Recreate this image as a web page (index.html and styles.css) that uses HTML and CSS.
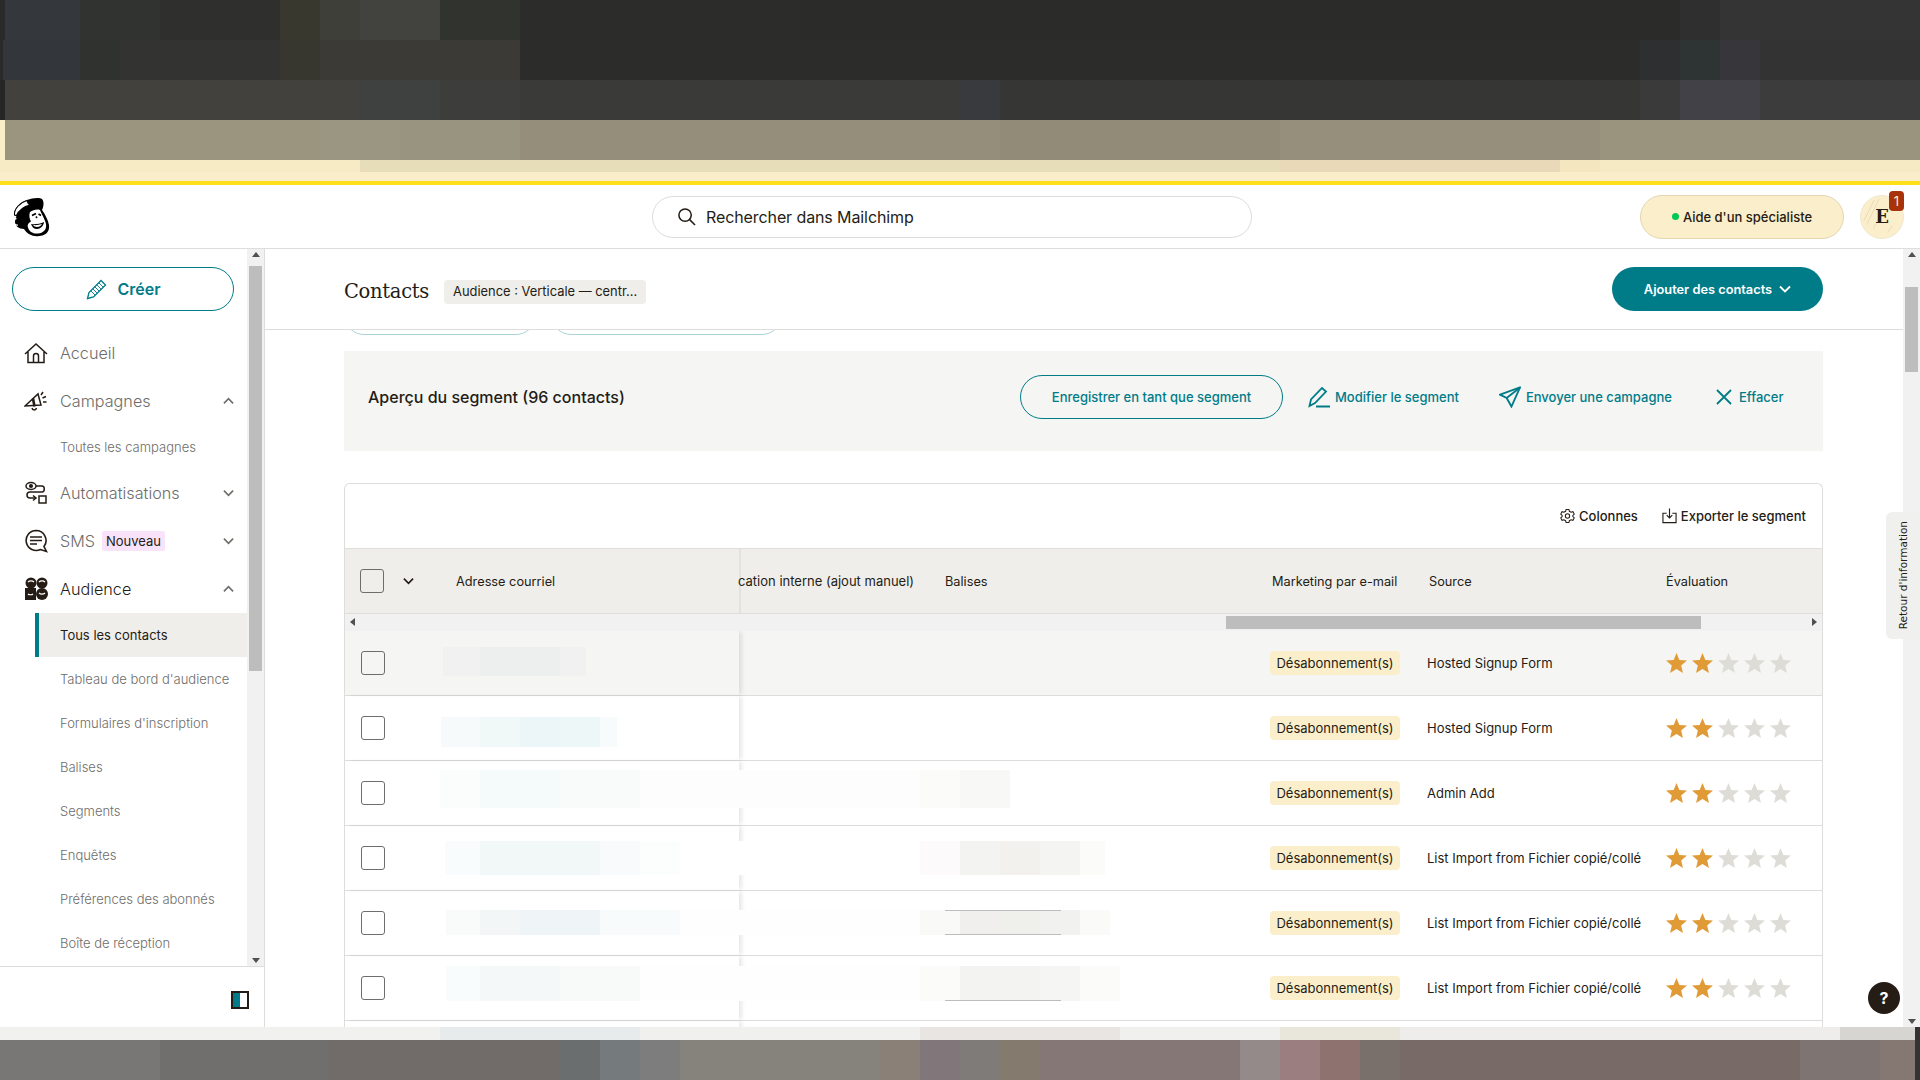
FILE: index.html
```html
<!DOCTYPE html>
<html lang="fr">
  <head>
    <meta charset="UTF-8" />
    <meta name="viewport" content="width=device-width, initial-scale=1.0" />
    <title>Contacts | Mailchimp</title>
    <link rel="stylesheet" href="styles.css">
  </head>
  <body>
    <svg class="defs" width="0" height="0">
      <symbol id="star" viewBox="0 0 22 21">
        <path d="M11 0l3 7.400 8 .6-6.100 5.100 1.900 7.900L11 16.700 4.200 21l1.900-7.900L0 8l8-.6z" fill="currentColor" />
      </symbol>
      <symbol id="chev-down" viewBox="0 0 12 8">
        <path d="M1 1.500l5 5 5-5" fill="none" stroke="currentColor" stroke-width="1.800" />
      </symbol>
      <symbol id="chev-up" viewBox="0 0 12 8">
        <path d="M1 6.500l5-5 5 5" fill="none" stroke="currentColor" stroke-width="1.800" />
      </symbol>
    </svg>

    <div class="blur-top">
      <div class="band band-1"></div>
      <div class="band band-2"></div>
      <div class="band band-3"></div>
      <div class="band band-4"></div>
      <div class="band band-5"></div>
      <div class="band band-6"></div>
    </div>

    <header class="topbar">
      <svg class="logo" viewBox="0 0 38 40">
        <path d="M2 18C2 11 8 5 15 3c5-2 12-3 15-1 2 2 2 7 0 11 3 4 6 10 7 15 1 7-4 11-10 11-6 1-12-2-15-7-5 0-9-3-9-7 0-3 1-5 2-7z" fill="#000" />
        <path d="M2.500 18C2 12 8 5.500 15 3.500c.5 2 1.500 3.500 3 4.500-6 1.500-11 5-13.500 10.500z" fill="#fff" stroke="#000" stroke-width="1.100" />
        <path d="M4.500 21.500c-2 0-2.800 2-2.500 3.800.3 1.800 2 3 3.800 2.700" fill="none" stroke="#fff" stroke-width="1.300" />
        <path d="M18 15c3-2 7-3 10-2 1 3 5 9 6 14 1 6-3 9-8 9.500-5 .5-9-2-10-6-1-3 1-5 3-6-2-3-2-7-1-9.500z" fill="#fff" />
        <path d="M20 18.500l4-2M26.500 17l2.500 1.500" stroke="#000" stroke-width="1.700" fill="none" />
        <path d="M24 19.500l1 1.500" stroke="#000" stroke-width="1.500" />
        <path d="M19 27c4 .5 9 0 13-2-.5 4-3.500 7-7 7-3 0-5-2-6-5z" fill="#000" />
        <path d="M21 28c3 .4 6 0 9-1-1 2-3 3-5 3-2 0-3-.7-4-2z" fill="#fff" />
      </svg>
      <div class="search">
        <svg class="search-icon" viewBox="0 0 20 20" fill="none" stroke="#241c15" stroke-width="1.600">
          <circle cx="8.500" cy="8.500" r="6.500" />
          <path d="M13 13l6 6" />
        </svg>
        <span>Rechercher dans Mailchimp</span>
      </div>
      <button class="expert-btn"><i class="dot"></i>Aide d'un spécialiste</button>
      <div class="avatar">
        <svg class="avatar-lines" viewBox="0 0 44 44" fill="none" stroke="#e2d6b4" stroke-width=".8">
          <path d="M3 26L14 4M6 30L19 3M13 34l5-10M28 38l5-7M31 14l4-3 2 4 4-1" />
        </svg>
        <span class="avatar-letter">E</span>
        <span class="avatar-badge">1</span>
      </div>
    </header>

    <div class="app">
      <aside class="sidebar">
        <div class="side-scroll">
          <nav class="nav">
            <button class="create-btn">
              <svg class="create-icon" viewBox="0 0 22 22" fill="none" stroke="#007c89" stroke-width="1.300">
                <path d="M1.500 20.500l1.500-6L15 2.500 19.500 7 7.500 19z" />
                <path d="M5 13l4 4M7 11l4 4M9 9l4 4M11 7l4 4M13 5l4 4" stroke-width=".9" />
              </svg>
              Créer
            </button>

            <a class="nav-item">
              <svg class="nav-icon" viewBox="0 0 24 24" fill="none" stroke="#241c15" stroke-width="1.500">
                <path d="M1 13L12 3l11 10M4 11v10.500h16V11" />
                <path d="M9.500 21.500V15a2.500 2.500 0 0 1 5 0v6.500" />
              </svg>
              Accueil
            </a>
            <a class="nav-item">
              <svg class="nav-icon" viewBox="0 0 24 24" fill="none" stroke="#241c15" stroke-width="1.500">
                <path d="M1 17L14 5l3 11z" />
                <path d="M9 9.500l1.500 8" stroke-width="2.600" />
                <path d="M8 19c.5 2.500 4 2.500 4.500 0M17 6l2-3M18.500 9l3.500-1.500M19 13h3.500" />
              </svg>
              Campagnes
              <svg class="nav-chev"><use href="#chev-up" /></svg>
            </a>
            <a class="sub-item">Toutes les campagnes</a>
            <a class="nav-item">
              <svg class="nav-icon" viewBox="0 0 24 24" fill="none" stroke="#241c15" stroke-width="1.500">
                <ellipse cx="7" cy="5" rx="5" ry="3.500" />
                <circle cx="7" cy="5" r="1.300" fill="#241c15" />
                <path d="M12 5h6c3 0 3 6 0 6H6c-4 0-4 6 0 6h6" />
                <path d="M9 14.500l3 2.500-3 2.500" />
                <rect x="15" y="15" width="7" height="7" />
              </svg>
              Automatisations
              <svg class="nav-chev"><use href="#chev-down" /></svg>
            </a>
            <a class="nav-item">
              <svg class="nav-icon" viewBox="0 0 24 24" fill="none" stroke="#241c15" stroke-width="1.600">
                <path d="M12 1.500a10 10 0 1 0 4.500 19l6 2-2.500-5A10 10 0 0 0 12 1.500z" />
                <path d="M6 8h12M6 11.500h12M6 15h7" />
              </svg>
              SMS
              <span class="tag-new">Nouveau</span>
              <svg class="nav-chev"><use href="#chev-down" /></svg>
            </a>
            <a class="nav-item current">
              <svg class="nav-icon" viewBox="0 0 24 24">
                <rect x="1" y="11" width="11" height="12" fill="#241c15" />
                <circle cx="7" cy="6" r="5.500" fill="#241c15" />
                <circle cx="18" cy="6" r="5.500" fill="#241c15" />
                <circle cx="18" cy="17" r="6" fill="#241c15" />
                <path d="M4 5c1.500-1.500 4.500-1.500 6 0M15 5c1.500-1.500 4.500-1.500 6 0M15 16c1.500 1.500 4.500 1.500 6 0M4 17c1 1 4 1 5 0" stroke="#fff" stroke-width="1.200" fill="none" />
              </svg>
              Audience
              <svg class="nav-chev"><use href="#chev-up" /></svg>
            </a>
            <a class="sub-item active">Tous les contacts</a>
            <a class="sub-item">Tableau de bord d'audience</a>
            <a class="sub-item">Formulaires d'inscription</a>
            <a class="sub-item">Balises</a>
            <a class="sub-item">Segments</a>
            <a class="sub-item">Enquêtes</a>
            <a class="sub-item">Préférences des abonnés</a>
            <a class="sub-item">Boîte de réception</a>
          </nav>
          <div class="scrollbar side-bar">
            <i class="arrow up"></i>
            <i class="thumb"></i>
            <i class="arrow down"></i>
          </div>
        </div>
        <div class="side-foot">
          <span class="collapse-icon"></span>
        </div>
      </aside>

      <main class="main">
        <div class="page-head">
          <h1>Contacts</h1>
          <span class="audience-tag">Audience : Verticale — centr...</span>
          <button class="add-btn">Ajouter des contacts <svg class="add-chev"><use href="#chev-down" /></svg></button>
        </div>

        <div class="content">
          <div class="pill-row">
            <span class="pill pill-a"></span>
            <span class="pill pill-b"></span>
          </div>

          <section class="segment">
            <h2>Aperçu du segment (96 contacts)</h2>
            <button class="save-btn">Enregistrer en tant que segment</button>
            <a class="seg-link link-edit">
              <svg class="seg-icon" viewBox="0 0 22 22" fill="none" stroke="#007c89" stroke-width="1.800">
                <path d="M1.500 20L3 13.500 14 2l4 3.500L7 17z" />
                <path d="M8 20.500h14" stroke-width="2" />
              </svg>
              Modifier le segment
            </a>
            <a class="seg-link link-send">
              <svg class="seg-icon" viewBox="0 0 23 22" fill="none" stroke="#007c89" stroke-width="1.900">
                <path d="M22 1L1 8.500l7 3.500 5 9z" />
                <path d="M22 1L8 12" />
              </svg>
              Envoyer une campagne
            </a>
            <a class="seg-link link-clear">
              <svg class="clear-icon" viewBox="0 0 16 16" fill="none" stroke="#007c89" stroke-width="1.800">
                <path d="M1 1l14 14M15 1L1 15" />
              </svg>
              Effacer
            </a>
          </section>

          <section class="card">
            <div class="card-tools">
              <a class="tool-link">
                <svg class="tool-icon" viewBox="0 0 16 16" fill="none" stroke="#241c15" stroke-width="1.100">
                  <path d="M6.500 1h3l.5 2 1.800 1 2-.6 1.400 2.600-1.500 1.400v1.200l1.500 1.400-1.400 2.600-2-.6-1.800 1-.5 2h-3l-.5-2-1.800-1-2 .6L.8 10l1.500-1.400V7.400L.8 6l1.400-2.600 2 .6L6 3z" />
                  <circle cx="8" cy="8" r="2.300" />
                </svg>
                Colonnes
              </a>
              <a class="tool-link">
                <svg class="tool-icon" viewBox="0 0 16 16" fill="none" stroke="#241c15" stroke-width="1.200">
                  <path d="M5 5H1v10h14V5h-4" />
                  <path d="M8 0v10M5 7l3 3 3-3" />
                </svg>
                Exporter le segment
              </a>
            </div>

            <div class="table-head">
              <div class="th-main">
                <span class="check"></span>
                <svg class="head-chev"><use href="#chev-down" /></svg>
                <span class="th-email">Adresse courriel</span>
              </div>
              <div class="th-clip">cation interne (ajout manuel)</div>
              <div class="th-tags">Balises</div>
              <div class="th-mkt">Marketing par e-mail</div>
              <div class="th-src">Source</div>
              <div>Évaluation</div>
            </div>

            <div class="hscroll">
              <i class="arrow left"></i>
              <i class="hthumb"></i>
              <i class="arrow right"></i>
            </div>

            <div class="row hover">
              <div class="col-main"><span class="check"></span></div>
              <div class="smear smear-1"></div>
              <div class="col-chip"><span class="chip">Désabonnement(s)</span></div>
              <div class="col-src">Hosted Signup Form</div>
              <div class="col-stars">
                <svg class="star on"><use href="#star" /></svg><svg class="star on"><use href="#star" /></svg><svg class="star"><use href="#star" /></svg><svg class="star"><use href="#star" /></svg><svg class="star"><use href="#star" /></svg>
              </div>
            </div>
            <div class="row">
              <div class="col-main"><span class="check"></span></div>
              <div class="smear smear-2"></div>
              <div class="col-chip"><span class="chip">Désabonnement(s)</span></div>
              <div class="col-src">Hosted Signup Form</div>
              <div class="col-stars">
                <svg class="star on"><use href="#star" /></svg><svg class="star on"><use href="#star" /></svg><svg class="star"><use href="#star" /></svg><svg class="star"><use href="#star" /></svg><svg class="star"><use href="#star" /></svg>
              </div>
            </div>
            <div class="row">
              <div class="col-main"><span class="check"></span></div>
              <div class="smear smear-3"></div>
              <div class="col-chip"><span class="chip">Désabonnement(s)</span></div>
              <div class="col-src">Admin Add</div>
              <div class="col-stars">
                <svg class="star on"><use href="#star" /></svg><svg class="star on"><use href="#star" /></svg><svg class="star"><use href="#star" /></svg><svg class="star"><use href="#star" /></svg><svg class="star"><use href="#star" /></svg>
              </div>
            </div>
            <div class="row">
              <div class="col-main"><span class="check"></span></div>
              <div class="smear smear-4"></div>
              <div class="col-chip"><span class="chip">Désabonnement(s)</span></div>
              <div class="col-src">List Import from Fichier copié/collé</div>
              <div class="col-stars">
                <svg class="star on"><use href="#star" /></svg><svg class="star on"><use href="#star" /></svg><svg class="star"><use href="#star" /></svg><svg class="star"><use href="#star" /></svg><svg class="star"><use href="#star" /></svg>
              </div>
            </div>
            <div class="row">
              <div class="col-main"><span class="check"></span></div>
              <div class="smear smear-5"></div>
              <div class="col-chip"><span class="chip">Désabonnement(s)</span></div>
              <div class="col-src">List Import from Fichier copié/collé</div>
              <div class="col-stars">
                <svg class="star on"><use href="#star" /></svg><svg class="star on"><use href="#star" /></svg><svg class="star"><use href="#star" /></svg><svg class="star"><use href="#star" /></svg><svg class="star"><use href="#star" /></svg>
              </div>
            </div>
            <div class="row">
              <div class="col-main"><span class="check"></span></div>
              <div class="smear smear-6"></div>
              <div class="col-chip"><span class="chip">Désabonnement(s)</span></div>
              <div class="col-src">List Import from Fichier copié/collé</div>
              <div class="col-stars">
                <svg class="star on"><use href="#star" /></svg><svg class="star on"><use href="#star" /></svg><svg class="star"><use href="#star" /></svg><svg class="star"><use href="#star" /></svg><svg class="star"><use href="#star" /></svg>
              </div>
            </div>
            <div class="row">
              <div class="col-main"></div>
            </div>
          </section>
        </div>
      </main>

      <div class="scrollbar page-bar">
        <i class="arrow up"></i>
        <i class="thumb"></i>
        <i class="arrow down"></i>
      </div>

      <div class="feedback-tab"><span>Retour d'information</span></div>
      <button class="help-btn">?</button>
    </div>

    <div class="blur-bottom">
      <div class="band strip"></div>
      <div class="band ground"></div>
    </div>
  </body>
</html>
```

FILE: styles.css
```css
* {
  box-sizing: border-box;
}

html,
body {
  height: 100%;
}

body {
  margin: 0;
  overflow: hidden;
  display: flex;
  flex-direction: column;
  font-family: Inter, "Liberation Sans", sans-serif;
  font-size: 13px;
  color: #241c15;
  background-color: #fff;
}

button {
  font-family: inherit;
  cursor: pointer;
}

.defs {
  position: absolute;
}

/* blurred browser chrome above and below the page */
.blur-top {
  flex: none;
}

.band-1 {
  height: 40px;
  background: linear-gradient(90deg, #2a2a2a 0 5px, #34373b 5px 80px, #303330 80px 160px, #2f2f2d 160px 280px, #38382f 280px 320px, #3f3f3a 320px 360px, #42423e 360px 440px, #31332f 440px 520px, #2c2d2b 520px 800px, #2b2b2a 800px 1680px, #2f2f2f 1680px 1720px, #343434 1720px);
}

.band-2 {
  height: 40px;
  background: linear-gradient(90deg, #2a2a2a 0 3px, #33363a 3px 80px, #2f322e 80px 120px, #333331 120px 280px, #38372f 280px 320px, #3b3a37 320px 520px, #2c2c2b 520px 1640px, #2d2f30 1640px 1680px, #2e3334 1680px 1720px, #36363b 1720px 1760px, #333 1760px);
}

.band-3 {
  height: 40px;
  background: linear-gradient(90deg, #262626 0 5px, #42413d 5px 360px, #3f4140 360px 440px, #3d3d3b 440px 520px, #3a3a38 520px 960px, #393a3e 960px 1000px, #363634 1000px 1640px, #3a3a3a 1640px 1680px, #414147 1680px 1760px, #3c3c3c 1760px);
}

.band-4 {
  height: 40px;
  background: linear-gradient(90deg, #f8eec8 0 5px, #9b957f 5px 320px, #9a9682 320px 400px, #989480 400px 520px, #948e7a 520px 1000px, #918b78 1000px 1280px, #968f7c 1280px 1600px, #9a937e 1600px);
}

.band-5 {
  height: 12px;
  background: linear-gradient(90deg, #f7ebc6 0 360px, #e8ddb9 360px 1280px, #ead9b8 1280px 1560px, #f4e6bf 1560px 1600px, #f6eac5 1600px);
}

.band-6 {
  height: 9px;
  background-color: #faedc9;
}

.blur-bottom {
  flex: none;
}

.strip {
  height: 13px;
  background: linear-gradient(90deg, #f1f1f0 0 440px, #e8ebeb 440px 640px, #f0f0ef 640px 920px, #e8e5e2 920px 1120px, #f0f0ee 1120px 1280px, #e9e6dc 1280px 1400px, #eeedeb 1400px 1840px, #d6d5d2 1840px 1915px, #333 1915px);
}

.ground {
  height: 40px;
  background: linear-gradient(90deg, #787776 0 160px, #706f6e 160px 330px, #716b69 330px 560px, #6b6e6f 560px 600px, #757a7d 600px 640px, #7d7d7e 640px 680px, #86827c 680px 880px, #8a8078 880px 920px, #817679 920px 960px, #7e7b78 960px 1000px, #847a6d 1000px 1040px, #857775 1040px 1240px, #958a8a 1240px 1280px, #9a7e80 1280px 1320px, #8d7270 1320px 1360px, #7a706b 1360px 1400px, #786a66 1400px 1800px, #7e7472 1800px 1880px, #857873 1880px 1915px, #333 1915px);
}

/* top bar */
.topbar {
  flex: none;
  height: 68px;
  display: flex;
  align-items: center;
  border-top: 4px solid #ffe01b;
  border-bottom: 1px solid #dedddb;
  background-color: #fff;
  position: relative;
}

.logo {
  width: 38px;
  height: 40px;
  margin-left: 12px;
}

.search {
  width: 600px;
  height: 42px;
  margin-left: 602px;
  padding-left: 24px;
  display: flex;
  align-items: center;
  gap: 10px;
  border: 1px solid #dedddb;
  border-radius: 21px;
  font-size: 16px;
  letter-spacing: -0.1px;
}

.search-icon {
  width: 19px;
  height: 19px;
}

.expert-btn {
  width: 204px;
  height: 44px;
  margin-left: 388px;
  display: flex;
  align-items: center;
  justify-content: center;
  gap: 4px;
  border: 1px solid #e3d6b0;
  border-radius: 22px;
  background-color: #fbeeca;
  font-size: 13px;
  font-weight: 500;
  color: #241c15;
  white-space: nowrap;
}

.dot {
  width: 7px;
  height: 7px;
  border-radius: 50%;
  background-color: #00c853;
}

.avatar {
  width: 44px;
  height: 44px;
  margin-left: 16px;
  border-radius: 50%;
  background-color: #fbeeca;
  border: 1px solid #efe7d0;
  display: flex;
  align-items: center;
  justify-content: center;
  position: relative;
}

.avatar-lines {
  position: absolute;
  inset: 0;
}

.avatar-letter {
  font-family: "DejaVu Serif", serif;
  font-weight: 700;
  font-size: 18px;
  position: relative;
}

.avatar-badge {
  position: absolute;
  top: -5px;
  right: -1px;
  width: 15px;
  height: 20px;
  border-radius: 4px;
  background-color: #a8320a;
  color: #fbeeca;
  font-size: 13px;
  line-height: 20px;
  text-align: center;
}

/* app frame */
.app {
  flex: 1;
  min-height: 0;
  display: flex;
  position: relative;
  overflow: hidden;
}

.sidebar {
  flex: none;
  width: 265px;
  display: flex;
  flex-direction: column;
  border-right: 1px solid #dedddb;
}

.side-scroll {
  flex: 1;
  min-height: 0;
  display: flex;
  border-bottom: 1px solid #dedddb;
}

.nav {
  flex: 1;
  min-width: 0;
  overflow: hidden;
}

.create-btn {
  display: flex;
  align-items: center;
  justify-content: center;
  gap: 9px;
  width: 222px;
  height: 44px;
  margin: 18px 0 18px 12px;
  padding-right: 5px;
  border: 1.500px solid #007c89;
  border-radius: 22px;
  background-color: #fff;
  color: #007c89;
  font-size: 16px;
  font-weight: 600;
}

.create-icon {
  width: 22px;
  height: 22px;
}

.nav-item {
  height: 48px;
  padding-left: 24px;
  display: flex;
  align-items: center;
  position: relative;
  font-size: 16.200px;
  font-weight: 300;
  color: #6e6d6a;
}

.nav-item.current {
  color: #241c15;
}

.nav-icon {
  width: 24px;
  height: 24px;
  margin-right: 12px;
}

.nav-chev {
  position: absolute;
  left: 223px;
  top: 20px;
  width: 11px;
  height: 8px;
  color: #6e6d6a;
}

.tag-new {
  margin-left: 7px;
  padding: 0 4px;
  height: 20px;
  line-height: 20px;
  border-radius: 2px;
  background-color: #f8e3fb;
  color: #241c15;
  font-size: 13px;
  font-weight: 400;
}

.sub-item {
  display: block;
  height: 44px;
  line-height: 44px;
  margin-left: 35px;
  padding-left: 25px;
  font-size: 13px;
  font-weight: 300;
  color: #6e6d6a;
  white-space: nowrap;
}

.sub-item.active {
  padding-left: 21px;
  border-left: 4px solid #007c89;
  background-color: #efeeea;
  color: #241c15;
  font-weight: 400;
}

.side-foot {
  flex: none;
  height: 60px;
  padding: 24px 0 0 231px;
}

.collapse-icon {
  display: block;
  width: 18px;
  height: 18px;
  border: 2px solid #241c15;
  background: linear-gradient(90deg, #007c89 50%, #fff 50%);
}

/* fake browser scrollbars */
.scrollbar {
  flex: none;
  width: 17px;
  display: flex;
  flex-direction: column;
  align-items: center;
  background-color: #f1f1f1;
  position: relative;
}

.scrollbar .thumb {
  display: block;
  width: 13px;
  background-color: #bdbdbd;
}

.side-bar .thumb {
  height: 405px;
  margin-top: 17px;
}

.page-bar .thumb {
  height: 85px;
  margin-top: 38px;
}

.arrow {
  display: block;
  position: absolute;
  width: 0;
  height: 0;
  border: 4px solid transparent;
}

.arrow.up {
  top: 3px;
  border-top: 0;
  border-bottom: 5px solid #505050;
}

.arrow.down {
  bottom: 3px;
  border-bottom: 0;
  border-top: 5px solid #505050;
}

.arrow.left {
  left: 5px;
  top: 4px;
  border-left: 0;
  border-right: 5px solid #505050;
}

.arrow.right {
  right: 5px;
  top: 4px;
  border-right: 0;
  border-left: 5px solid #505050;
}

.main {
  flex: 1;
  min-width: 0;
  display: flex;
  flex-direction: column;
}

.page-bar {
  height: 100%;
}

.page-head {
  flex: none;
  height: 81px;
  padding: 0 80px 0 79px;
  display: flex;
  align-items: center;
  border-bottom: 1px solid #dedddb;
}

.page-head h1 {
  margin: 5px 15px 0 0;
  font-family: "DejaVu Serif", serif;
  font-size: 19.500px;
  font-weight: 400;
  letter-spacing: -0.3px;
}

.audience-tag {
  margin-top: 5px;
  padding: 0 9px;
  height: 24px;
  line-height: 24px;
  border-radius: 4px;
  background-color: #efeeea;
  font-size: 12.900px;
  white-space: nowrap;
}

.add-btn {
  margin-left: auto;
  width: 211px;
  height: 44px;
  display: flex;
  align-items: center;
  justify-content: center;
  gap: 7px;
  border: 0;
  border-radius: 22px;
  background-color: #007c89;
  color: #fff;
  font-size: 12.800px;
  font-weight: 600;
}

.add-chev {
  width: 12px;
  height: 8px;
}

.content {
  flex: 1;
  min-height: 0;
  overflow: hidden;
  padding: 0 80px 0 79px;
}

.pill-row {
  height: 5px;
  margin-bottom: 16px;
  overflow: hidden;
  display: flex;
  gap: 15px;
}

.pill {
  display: block;
  height: 40px;
  margin-top: -35px;
  border: 1.500px solid #a9d3d6;
  border-radius: 20px;
}

.pill-a {
  width: 192px;
}

.pill-b {
  width: 231px;
}

/* segment panel */
.segment {
  height: 100px;
  display: flex;
  align-items: flex-start;
  padding: 24px 0 0 24px;
  background-color: #f5f5f3;
}

.segment h2 {
  margin: 0;
  width: 652px;
  line-height: 44px;
  font-size: 16px;
  font-weight: 500;
}

.save-btn {
  width: 263px;
  height: 44px;
  border: 1.500px solid #007c89;
  border-radius: 22px;
  background: transparent;
  color: #007c89;
  font-size: 13px;
  font-weight: 500;
}

.seg-link {
  height: 44px;
  display: flex;
  align-items: center;
  gap: 5px;
  color: #007c89;
  font-size: 13px;
  font-weight: 500;
  white-space: nowrap;
}

.link-edit {
  margin-left: 25px;
}

.link-send {
  margin-left: 40px;
}

.link-clear {
  margin-left: 44px;
  gap: 7px;
}

.seg-icon {
  width: 22px;
  height: 22px;
}

.clear-icon {
  width: 16px;
  height: 16px;
}

/* table card */
.card {
  margin-top: 32px;
  border: 1px solid #dedddb;
  border-bottom: 0;
  border-radius: 6px 6px 0 0;
}

.card-tools {
  height: 64px;
  padding-right: 16px;
  display: flex;
  align-items: center;
  justify-content: flex-end;
  gap: 24px;
}

.tool-link {
  display: flex;
  align-items: center;
  gap: 4px;
  font-size: 13px;
  font-weight: 500;
}

.tool-icon {
  width: 15px;
  height: 16px;
}

.table-head,
.row {
  display: grid;
  grid-template-columns: 394px 181px 350px 157px 239px 1fr;
  align-items: center;
}

.table-head {
  height: 66px;
  border-top: 1px solid #dedddb;
  border-bottom: 1px solid #dedddb;
  background-color: #efeeea;
  font-size: 12.750px;
}

.th-main {
  height: 100%;
  display: flex;
  align-items: center;
  padding-left: 15px;
  box-shadow: 2px 0 0 #e3e2de;
}

.head-chev {
  width: 11px;
  height: 8px;
  margin-left: 19px;
}

.th-email {
  margin-left: 42px;
}

.th-clip {
  margin-left: -1px;
  font-size: 13px;
  white-space: nowrap;
}

.th-tags {
  padding-left: 25px;
}

.th-mkt,
.th-src {
  padding-left: 2px;
}

.hscroll {
  height: 17px;
  background-color: #f1f1f1;
  position: relative;
  padding: 2px 0 0 881px;
}

.hthumb {
  display: block;
  width: 475px;
  height: 13px;
  background-color: #bdbdbd;
}

.row {
  height: 65px;
  border-bottom: 1px solid #dedddb;
  font-size: 13px;
}

.row > * {
  grid-row: 1;
}

.row.hover {
  background-color: #f5f5f3;
}

.col-main {
  grid-column: 1;
  height: 100%;
  display: flex;
  align-items: center;
  padding-left: 16px;
  box-shadow: 4px 0 4px -1px rgba(0, 0, 0, 0.09);
}

.check {
  display: block;
  width: 24px;
  height: 24px;
  border: 1px solid #6e6d6a;
  border-radius: 3px;
}

.col-chip {
  grid-column: 4;
}

.col-src {
  grid-column: 5;
}

.col-stars {
  grid-column: 6;
  display: flex;
  gap: 5px;
}

.chip {
  display: inline-block;
  width: 130px;
  height: 24px;
  line-height: 24px;
  border-radius: 4px;
  background-color: #fbeeca;
  text-align: center;
  white-space: nowrap;
}

.star {
  width: 21px;
  height: 20px;
  color: #dedcd6;
}

.star.on {
  color: #e09b36;
}

/* blurred e-mail and tag cells: drawn above the column shadow */
.smear {
  grid-column: 1 / 4;
  align-self: start;
  margin-left: 95px;
  position: relative;
  z-index: 1;
}

.smear-1 {
  width: 146px;
  height: 29px;
  margin-top: 16px;
  background: linear-gradient(90deg, transparent 0 3px, #f0f1f0 3px 40px, #edefee 40px 120px, #f1f1f1 120px);
}

.smear-2 {
  width: 177px;
  height: 30px;
  margin-top: 21px;
  background: linear-gradient(90deg, transparent 0 1px, #f7fafa 1px 40px, #f1f8f8 40px 80px, #ecf5f7 80px 120px, #eef7f7 120px 160px, #f8fbfb 160px);
}

.smear-3 {
  height: 38px;
  margin-top: 9px;
  width: 570px;
  background: linear-gradient(90deg, #fbfdfc 0 40px, #f5fafa 40px 120px, #f8fbfa 120px 200px, #fdfdfd 200px 480px, #fbfbf9 480px 520px, #f8f8f6 520px);
}

.smear-4 {
  height: 34px;
  margin-top: 15px;
  width: 680px;
  background: linear-gradient(90deg, #fff 0 5px, #f8fcfd 5px 40px, #f2f7f8 40px 160px, #f8fafb 160px 200px, #fcfdfd 200px 240px, #fff 240px 480px, #fcfafa 480px 520px, #f3f3f2 520px 560px, #f2f1ee 560px 600px, #f4f4f3 600px 640px, #fbfbf9 640px 665px, #fff 665px);
}

.smear-5 {
  height: 25px;
  margin-top: 19px;
  width: 690px;
  background:
    linear-gradient(#bdbdbd, #bdbdbd) 505px 0 / 116px 1px no-repeat,
    linear-gradient(#bdbdbd, #bdbdbd) 505px 24px / 116px 1px no-repeat,
    linear-gradient(90deg, #fff 0 6px, #f9fbfa 6px 40px, #f2f6f6 40px 80px, #eff5f6 80px 160px, #f8fbfb 160px 240px, #fefefe 240px 480px, #f9f9f8 480px 520px, #f1efed 520px 560px, #eff0ec 560px 600px, #f1f1ef 600px 640px, #fafaf8 640px 670px, #fff 670px);
}

.smear-6 {
  height: 35px;
  margin-top: 10px;
  width: 700px;
  background:
    linear-gradient(#bdbdbd, #bdbdbd) 505px 34px / 116px 1px no-repeat,
    linear-gradient(90deg, #fff 0 6px, #f9fcfd 6px 40px, #f4f8f8 40px 120px, #f8fafa 120px 200px, #fefefe 200px 480px, #fbfbfa 480px 520px, #f3f3f1 520px 600px, #f5f5f3 600px 640px, #fbfbf9 640px 680px, #fff 680px);
}

/* overlays */
.feedback-tab {
  position: absolute;
  right: 0;
  top: 263px;
  width: 34px;
  height: 127px;
  display: flex;
  align-items: center;
  justify-content: center;
  border-radius: 6px 0 0 6px;
  background-color: #f0f0ee;
}

.feedback-tab span {
  writing-mode: vertical-rl;
  transform: rotate(180deg);
  font-family: "DejaVu Sans", sans-serif;
  font-size: 10.500px;
  white-space: nowrap;
}

.help-btn {
  position: absolute;
  left: 1868px;
  top: 733px;
  width: 32px;
  height: 32px;
  border: 0;
  padding: 0;
  border-radius: 50%;
  background-color: #241c15;
  color: #fff;
  font-size: 16px;
  font-weight: 700;
}
```
